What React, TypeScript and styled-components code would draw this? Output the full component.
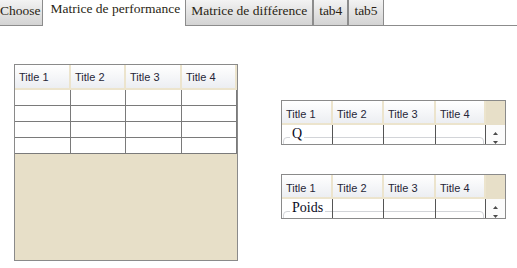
import React from "react";
import styled, { createGlobalStyle } from "styled-components";

const Global = createGlobalStyle`
  html, body { margin: 0; padding: 0; background: #fff; }
  body { font-family: "Liberation Sans", Arial, sans-serif; }
`;

const Page = styled.div`
  width: 517px;
  height: 268px;
  overflow: hidden;
`;

const TabBar = styled.div`
  display: flex;
  margin-left: -5px;
  height: 26px;
`;

const Tab = styled.div<{ $active?: boolean }>`
  box-sizing: border-box;
  height: 26px;
  padding: ${(p) => (p.$active ? "0 4px 7px 7px" : "0 5px 4px 5px")};
  display: flex;
  align-items: center;
  white-space: nowrap;
  font-family: "Liberation Serif", "Times New Roman", serif;
  font-size: 13.5px;
  color: #2a1f14;
  background: ${(p) => (p.$active ? "#fff" : "linear-gradient(#f3f3f3, #d3d3d3)")};
  border-left: 1px solid ${(p) => (p.$active ? "#fff" : "#8c8c8c")};
  border-right: 1px solid ${(p) => (p.$active ? "#fff" : "#8c8c8c")};
  border-bottom: 1px solid ${(p) => (p.$active ? "#fff" : "#8c8c8c")};

  &:first-child {
    padding-left: 4px;
    padding-right: 1px;
  }
`;

const TabFiller = styled.div`
  flex: 1;
  border-bottom: 1px solid #8c8c8c;
`;

const Content = styled.div`
  display: flex;
  align-items: flex-start;
  gap: 43px;
  padding: 38px 0 0 14px;
`;

const BigBox = styled.div`
  box-sizing: border-box;
  width: 224px;
  height: 197px;
  border: 1px solid #8a8a8a;
  background: #e7dfc8;
`;

const SideColumn = styled.div`
  display: flex;
  flex-direction: column;
  gap: 29px;
  margin-top: 36px;
`;

const SmallBox = styled.div`
  box-sizing: border-box;
  width: 225px;
  border: 1px solid #8a8a8a;
  background: #fff;
`;

const HeaderRow = styled.div<{ $cols: string; $height: number }>`
  display: grid;
  grid-template-columns: ${(p) => p.$cols};
  height: ${(p) => p.$height}px;
`;

const HeaderCell = styled.div<{ $padTop?: number }>`
  box-sizing: border-box;
  display: flex;
  align-items: center;
  padding: ${(p) => p.$padTop ?? 0}px 0 0 4px;
  background: linear-gradient(#ffffff, #eceef2);
  border-right: 2px solid #ece4cd;
  border-bottom: 2px solid #ece4cd;
  font-size: 11px;
  color: #262638;
  white-space: nowrap;
`;

const HeaderSpacer = styled.div`
  background: #e7dfc8;
`;

const BodyGrid = styled.div`
  display: grid;
  grid-template-columns: 56px 55px 56px 55px;
  background: #fff;
`;

const BodyCell = styled.div`
  box-sizing: border-box;
  height: 16px;
  border-right: 1px solid #7a7a7a;
  border-bottom: 1px solid #7a7a7a;
`;

const DataRow = styled.div`
  display: grid;
  grid-template-columns: 204px 19px;
  height: 19px;
  overflow: hidden;
`;

const FieldArea = styled.div`
  position: relative;
  overflow: hidden;
`;

const Fieldset = styled.div`
  position: relative;
  box-sizing: border-box;
  margin: 12px 2px 0 1px;
  height: 20px;
  border: 1px solid #d2d4d8;
  border-radius: 4px;
`;

const Legend = styled.span`
  position: absolute;
  top: -12px;
  left: 6px;
  padding: 0 2px;
  background: #fff;
  font-family: "Liberation Serif", "Times New Roman", serif;
  font-size: 14px;
  line-height: 16px;
  color: #0b0b1e;
`;

const ColumnLines = styled.div`
  position: absolute;
  inset: 0;
  display: grid;
  grid-template-columns: 51px 51px 52px 50px;
`;

const ColumnLine = styled.div`
  border-right: 1px solid #555;
`;

const Scrollbar = styled.div`
  background: #fbfbfb;
  display: flex;
  justify-content: center;
`;

const titles = ["Title 1", "Title 2", "Title 3", "Title 4"];

function ScrollArrows() {
  return (
    <svg width="18" height="19" viewBox="0 0 18 19">
      <path d="M6 10 L11 10 L8.5 7 Z" fill="#4a4a4a" />
      <path d="M6 16 L11 16 L8.5 19 Z" fill="#4a4a4a" />
    </svg>
  );
}

function SmallTable({ label }: { label: string }) {
  return (
    <SmallBox>
      <HeaderRow $cols="51px 51px 52px 50px 19px" $height={24}>
        {titles.map((t) => (
          <HeaderCell key={t} $padTop={3}>
            {t}
          </HeaderCell>
        ))}
        <HeaderSpacer />
      </HeaderRow>
      <DataRow>
        <FieldArea>
          <Fieldset>
            <Legend>{label}</Legend>
          </Fieldset>
          <ColumnLines>
            <ColumnLine />
            <ColumnLine />
            <ColumnLine />
            <ColumnLine />
          </ColumnLines>
        </FieldArea>
        <Scrollbar>
          <ScrollArrows />
        </Scrollbar>
      </DataRow>
    </SmallBox>
  );
}

export default function App() {
  const tabs = ["Choose", "Matrice de performance", "Matrice de différence", "tab4", "tab5"];
  return (
    <Page>
      <Global />
      <TabBar>
        {tabs.map((t, i) => (
          <Tab key={t} $active={i === 1}>
            {t}
          </Tab>
        ))}
        <TabFiller />
      </TabBar>
      <Content>
        <BigBox>
          <HeaderRow $cols="56px 55px 56px 55px" $height={25}>
            {titles.map((t) => (
              <HeaderCell key={t}>{t}</HeaderCell>
            ))}
          </HeaderRow>
          <BodyGrid>
            {Array.from({ length: 16 }).map((_, i) => (
              <BodyCell key={i} />
            ))}
          </BodyGrid>
        </BigBox>
        <SideColumn>
          <SmallTable label="Q" />
          <SmallTable label="Poids" />
        </SideColumn>
      </Content>
    </Page>
  );
}
